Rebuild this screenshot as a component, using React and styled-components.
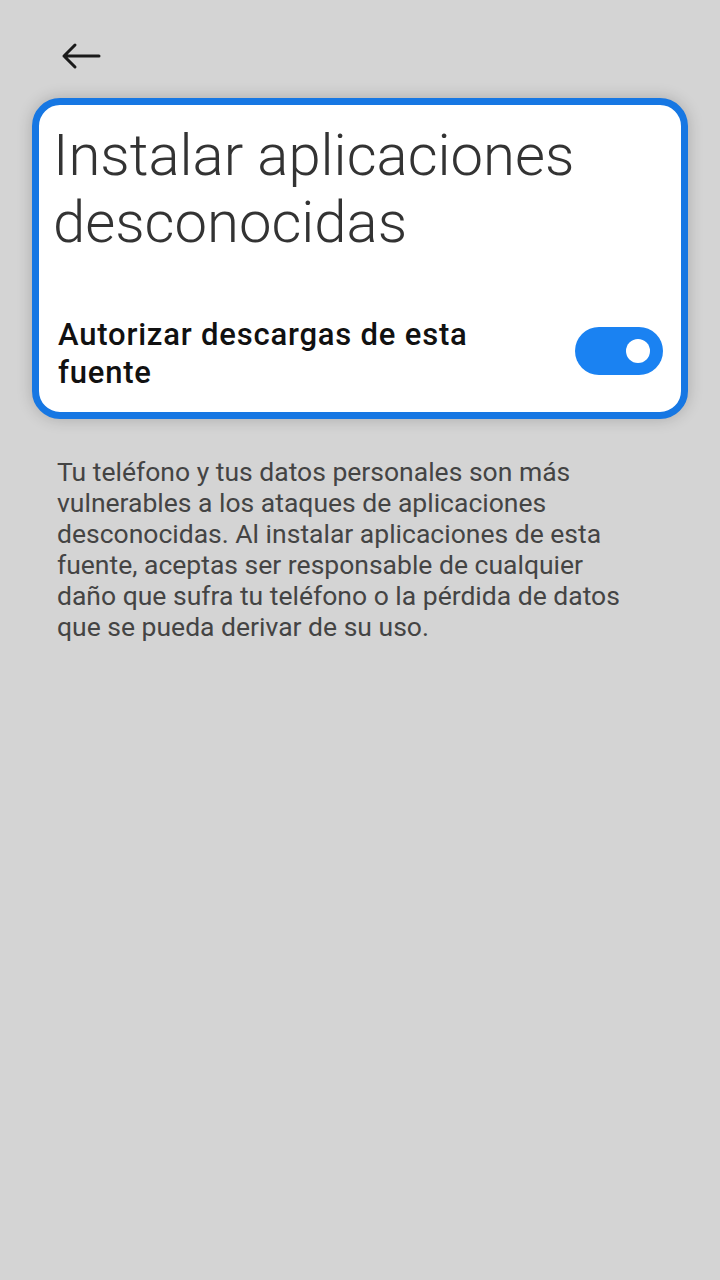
import React from 'react';
import styled, { createGlobalStyle } from 'styled-components';

const GlobalStyle = createGlobalStyle`
  html, body {
    margin: 0;
    padding: 0;
    background: #d4d4d4;
  }
  body {
    font-family: Roboto, "Noto Sans", sans-serif;
  }
`;

const Screen = styled.div`
  width: 720px;
  min-height: 1280px;
  background: #d4d4d4;
  box-sizing: border-box;
  padding: 34px 32px 0;
`;

const TopBar = styled.div`
  height: 44px;
  display: flex;
  align-items: center;
  padding-left: 28px;
  margin-bottom: 20px;
`;

const BackButton = styled.button`
  border: 0;
  background: none;
  padding: 0;
  width: 42px;
  height: 42px;
  display: flex;
  align-items: center;
  justify-content: center;
  cursor: pointer;
`;

const Card = styled.div`
  background: #ffffff;
  border: 7px solid #1677e3;
  border-radius: 28px;
  box-shadow: 0 0 16px rgba(0, 0, 0, 0.2);
  padding: 17px 18px 20px 14px;
`;

const Title = styled.h1`
  margin: 0;
  font-weight: 300;
  font-size: 58px;
  line-height: 67px;
  color: #333;
  letter-spacing: 0;
`;

const Row = styled.div`
  display: flex;
  align-items: center;
  justify-content: space-between;
  margin-top: 60px;
`;

const Label = styled.div`
  font-size: 31px;
  font-weight: 500;
  line-height: 38px;
  letter-spacing: 0.8px;
  color: #111;
  max-width: 455px;
  padding-left: 5px;
`;

const Toggle = styled.div`
  width: 88px;
  height: 48px;
  border-radius: 24px;
  background: ${(props) => (props.on ? '#1a82f2' : '#bbb')};
  display: flex;
  align-items: center;
  justify-content: ${(props) => (props.on ? 'flex-end' : 'flex-start')};
  padding: 0 13px;
  box-sizing: border-box;
  flex-shrink: 0;
  margin-bottom: 6px;
`;

const Knob = styled.div`
  width: 24px;
  height: 24px;
  border-radius: 50%;
  background: #fff;
`;

const Description = styled.p`
  margin: 37px 0 0 25px;
  font-size: 26.5px;
  line-height: 31px;
  color: #444;
  max-width: 575px;
`;

const BackArrow = () => (
  <svg width="40" height="28" viewBox="0 0 40 28" fill="none">
    <path
      d="M38 14H3M14 3L3 14l11 11"
      stroke="#1a1a1a"
      strokeWidth="3"
      strokeLinecap="round"
      strokeLinejoin="round"
    />
  </svg>
);

const App = () => (
  <Screen>
    <GlobalStyle />
    <TopBar>
      <BackButton aria-label="Atrás">
        <BackArrow />
      </BackButton>
    </TopBar>
    <Card>
      <Title>Instalar aplicaciones desconocidas</Title>
      <Row>
        <Label>Autorizar descargas de esta fuente</Label>
        <Toggle on={1}>
          <Knob />
        </Toggle>
      </Row>
    </Card>
    <Description>
      Tu teléfono y tus datos personales son más vulnerables a los ataques de
      aplicaciones desconocidas. Al instalar aplicaciones de esta fuente,
      aceptas ser responsable de cualquier daño que sufra tu teléfono o la
      pérdida de datos que se pueda derivar de su uso.
    </Description>
  </Screen>
);

export default App;
